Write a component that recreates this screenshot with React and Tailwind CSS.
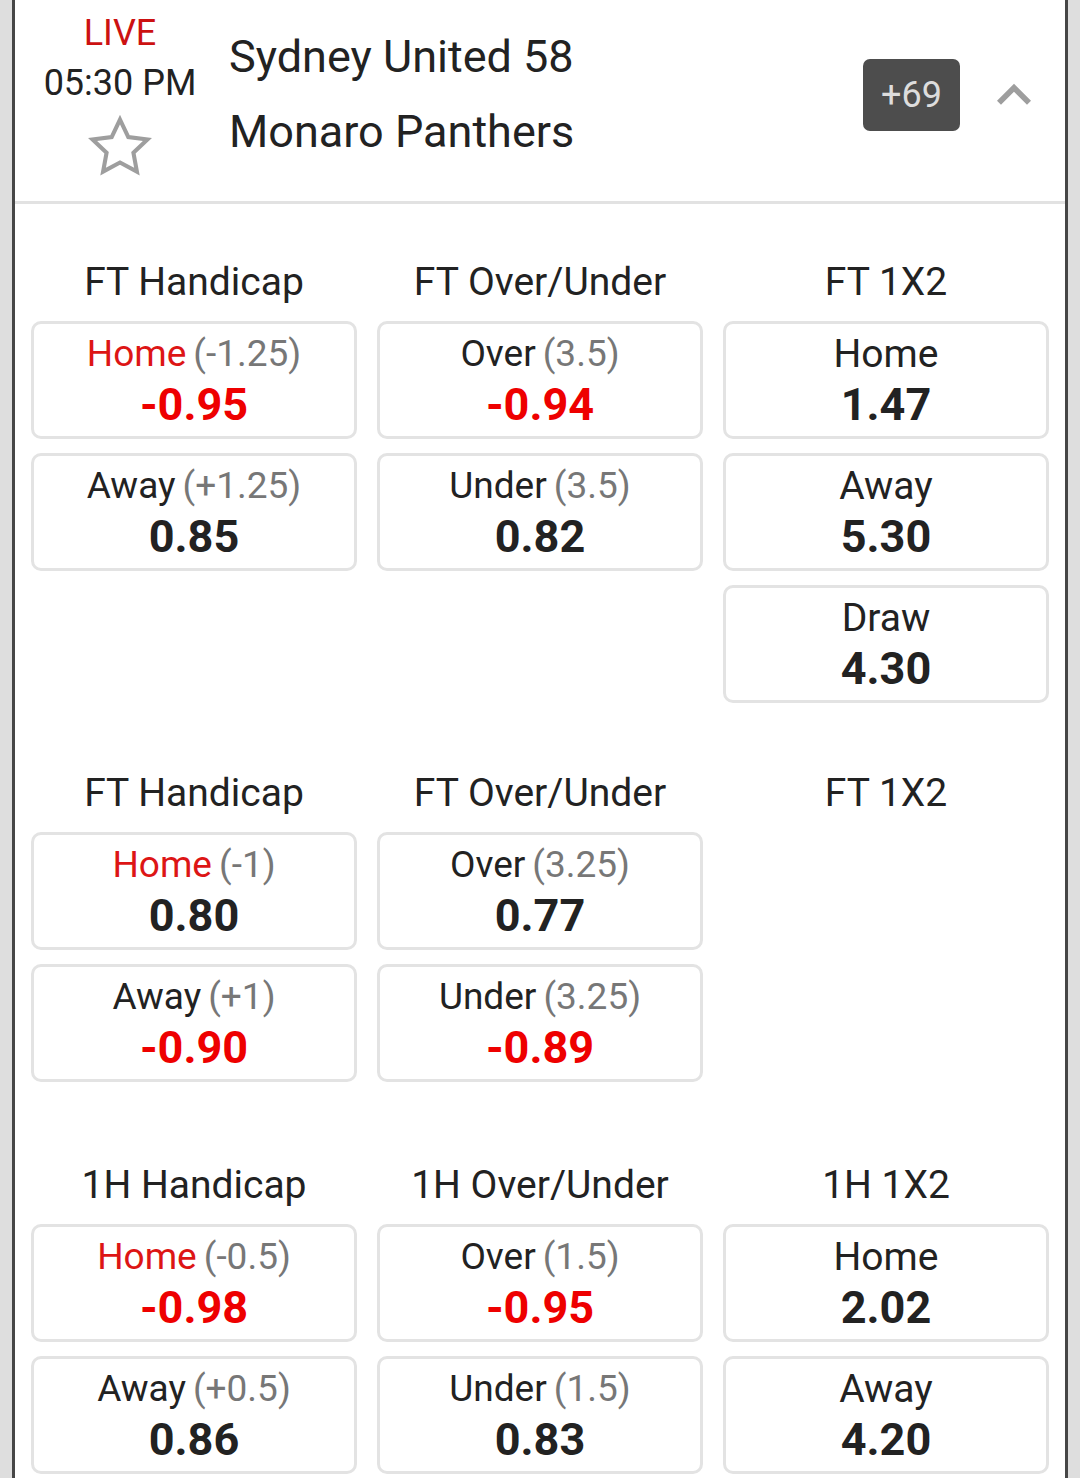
import React from "react";

const font = { fontFamily: "Roboto, 'Noto Sans', sans-serif" };

function Card({ label, line, value, red, labelRed }) {
  return (
    <div className="h-[118px] rounded-[10px] border-[3px] border-[#e3e3e3] bg-white flex flex-col items-center pt-[5px]">
      <div className={"h-[50px] leading-[50px] whitespace-nowrap " + (line ? "text-[37px]" : "text-[39px]")}>
        <span className={labelRed ? "text-[#dd1515]" : "text-[#222222]"}>{label}</span>
        {line && <span className="text-[#777777] ml-[7px]">{line}</span>}
      </div>
      <div className={"h-[52px] leading-[52px] text-[45px] font-bold " + (red ? "text-[#ee0000]" : "text-[#222222]")}>
        {value}
      </div>
    </div>
  );
}

function Column({ title, cards }) {
  return (
    <div className="flex flex-col">
      <div className="h-[50px] leading-[50px] text-[39px] text-[#222222] text-center mb-[14px] whitespace-nowrap">{title}</div>
      <div className="flex flex-col gap-[14px]">
        {cards.map((c, i) => (
          <Card key={i} {...c} />
        ))}
      </div>
    </div>
  );
}

function Section({ cols, className }) {
  return (
    <div className={"grid grid-cols-3 gap-x-[20px] px-[16px] items-start " + className}>
      {cols.map((c, i) => (
        <Column key={i} {...c} />
      ))}
    </div>
  );
}

export default function App() {
  const s1 = [
    {
      title: "FT Handicap",
      cards: [
        { label: "Home", line: "(-1.25)", value: "-0.95", red: true, labelRed: true },
        { label: "Away", line: "(+1.25)", value: "0.85" },
      ],
    },
    {
      title: "FT Over/Under",
      cards: [
        { label: "Over", line: "(3.5)", value: "-0.94", red: true },
        { label: "Under", line: "(3.5)", value: "0.82" },
      ],
    },
    {
      title: "FT 1X2",
      cards: [
        { label: "Home", value: "1.47" },
        { label: "Away", value: "5.30" },
        { label: "Draw", value: "4.30" },
      ],
    },
  ];
  const s2 = [
    {
      title: "FT Handicap",
      cards: [
        { label: "Home", line: "(-1)", value: "0.80", labelRed: true },
        { label: "Away", line: "(+1)", value: "-0.90", red: true },
      ],
    },
    {
      title: "FT Over/Under",
      cards: [
        { label: "Over", line: "(3.25)", value: "0.77" },
        { label: "Under", line: "(3.25)", value: "-0.89", red: true },
      ],
    },
    { title: "FT 1X2", cards: [] },
  ];
  const s3 = [
    {
      title: "1H Handicap",
      cards: [
        { label: "Home", line: "(-0.5)", value: "-0.98", red: true, labelRed: true },
        { label: "Away", line: "(+0.5)", value: "0.86" },
      ],
    },
    {
      title: "1H Over/Under",
      cards: [
        { label: "Over", line: "(1.5)", value: "-0.95", red: true },
        { label: "Under", line: "(1.5)", value: "0.83" },
      ],
    },
    {
      title: "1H 1X2",
      cards: [
        { label: "Home", value: "2.02" },
        { label: "Away", value: "4.20" },
      ],
    },
  ];

  return (
    <div className="w-[1080px] h-[1478px] overflow-hidden bg-[#dedede]" style={font}>
      <div className="mx-[12px] h-full border-x-[3px] border-[#464646] bg-white">
        {/* header */}
        <div className="h-[201px] flex items-start relative">
          <div className="w-[210px] flex flex-col items-center pt-[11px]">
            <div className="h-[44px] leading-[44px] text-[36px] text-[#cc1111]">LIVE</div>
            <div className="h-[40px] leading-[40px] text-[36px] text-[#222222] mt-[8px]">05:30 PM</div>
            <svg width="70" height="70" viewBox="0 0 24 24" className="mt-[9px]">
              <polygon
                points="12,2.6 14.85,8.6 21.4,9.45 16.6,13.95 17.8,20.45 12,17.3 6.2,20.45 7.4,13.95 2.6,9.45 9.15,8.6"
                fill="none"
                stroke="#9e9e9e"
                strokeWidth="1.4"
                strokeLinejoin="miter"
              />
            </svg>
          </div>
          <div className="ml-[4px] flex flex-col pt-[32px] text-[45px] text-[#222222]">
            <div className="h-[50px] leading-[50px]">Sydney United 58</div>
            <div className="h-[50px] leading-[50px] mt-[25px]">Monaro Panthers</div>
          </div>
          <div className="ml-auto flex items-center mt-[59px] mr-[17px]">
            <div className="w-[97px] h-[72px] rounded-[7px] bg-[#4d4d4d] text-[#dddddd] text-[36px] flex items-center justify-center">
              +69
            </div>
            <svg width="68" height="68" viewBox="0 0 24 24" className="ml-[20px]">
              <path d="M12 8l-6 6 1.41 1.41L12 10.83l4.59 4.58L18 14z" fill="#9e9e9e" />
            </svg>
          </div>
        </div>
        <div className="h-[3px] bg-[#e2e2e2]" />
        <Section cols={s1} className="pt-[53px]" />
        <Section cols={s2} className="pt-[65px]" />
        <Section cols={s3} className="pt-[78px]" />
      </div>
    </div>
  );
}
